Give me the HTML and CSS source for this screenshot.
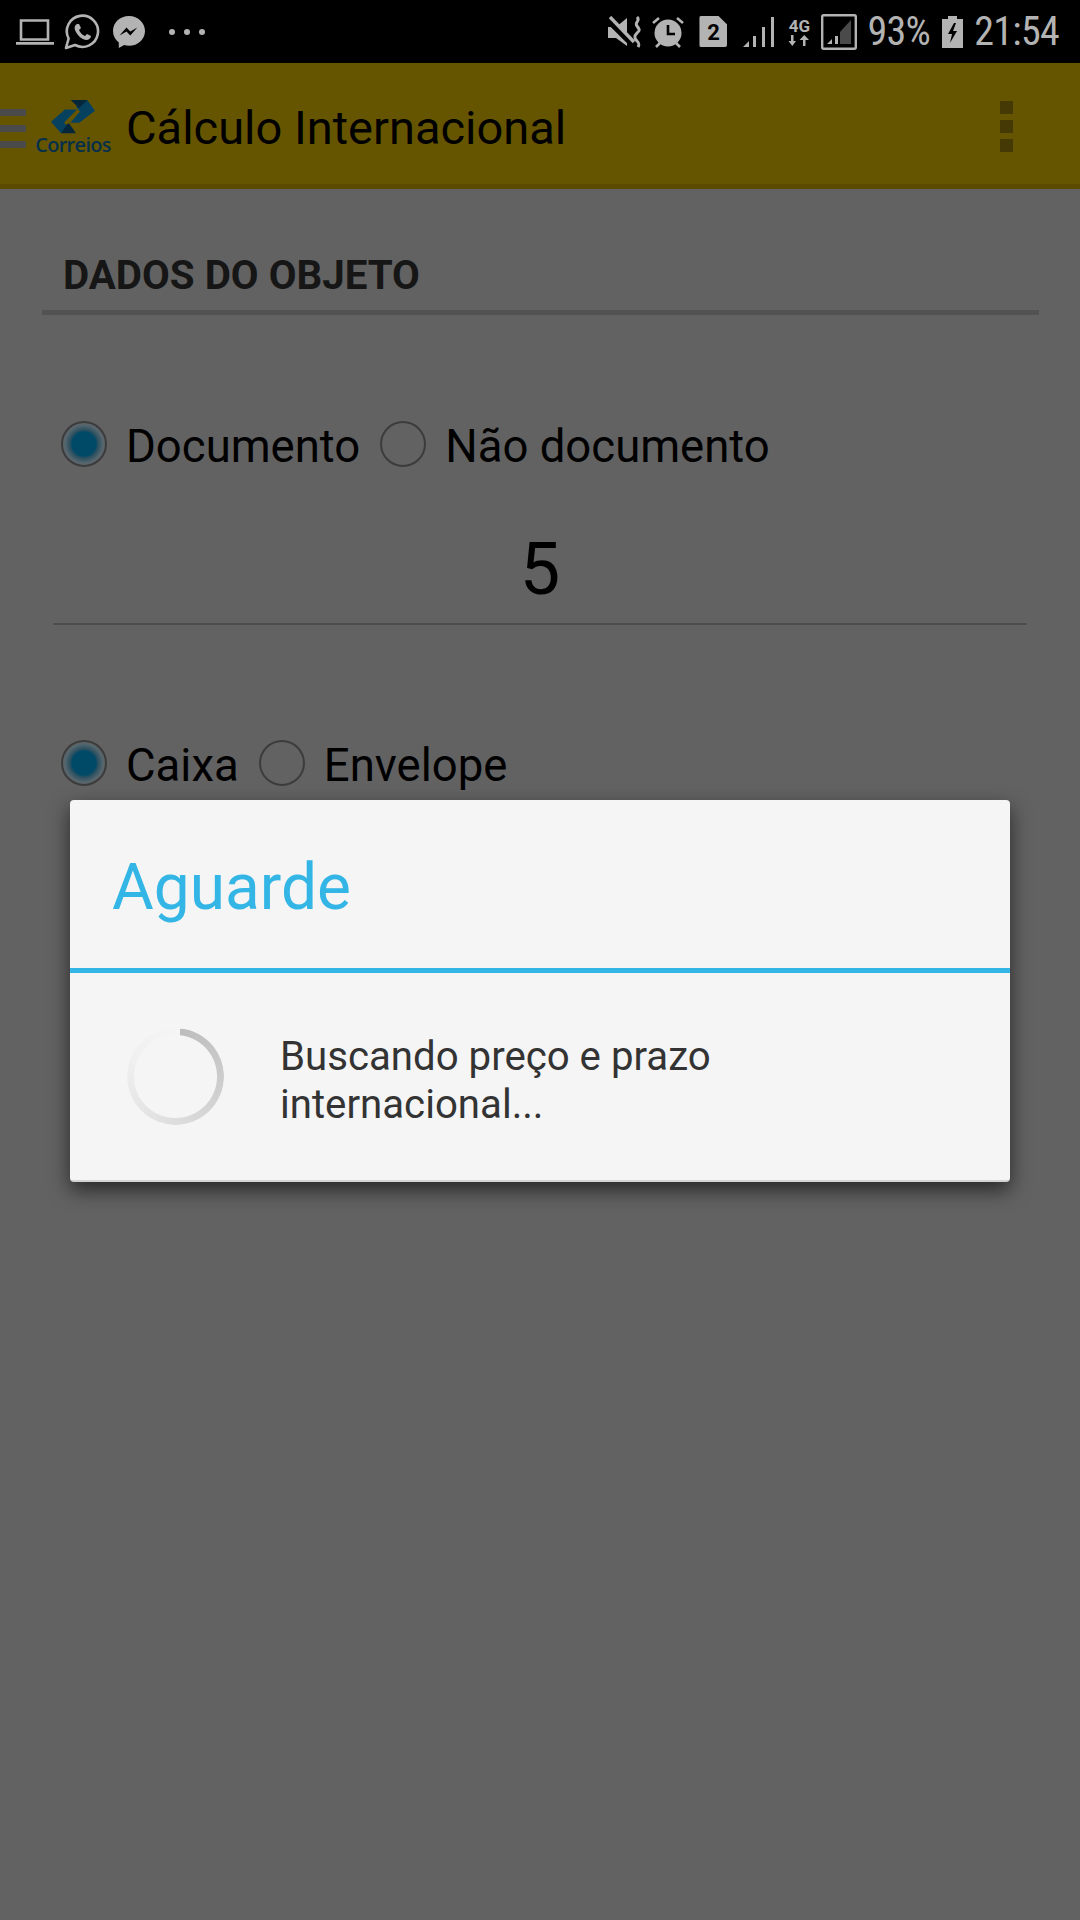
FILE: index.html
```html
<!DOCTYPE html>
<html lang="pt-BR">
<head>
  <meta charset="UTF-8">
  <title>Cálculo Internacional</title>
  <link rel="stylesheet" href="styles.css">
</head>
<body>
  <div class="screen">
    <div class="statusbar">
      <div class="status-left">
        <svg class="ic" width="38" height="30" viewBox="0 0 38 30"><path d="M5 3.500h27v19H5z" fill="none" stroke="#b3b3b3" stroke-width="2.600"/><path d="M0 25h38v2.800H0z" fill="#b3b3b3"/></svg>
        <svg class="ic wa" width="36" height="36" viewBox="0 0 36 36"><path d="M2 34l2.600-9.500A15.600 15.600 0 1 1 11 31z" fill="none" stroke="#b3b3b3" stroke-width="2.600" stroke-linejoin="round"/><path d="M13 10c-2 1-3 3-2 6 2 5 6 9 11 10 3 0 5-2 5-4l-4-2-2 2c-3-1-5-4-6-6l2-2-2-4z" fill="#b3b3b3"/></svg>
        <svg class="ic ms" width="32" height="32" viewBox="0 0 32 32"><path d="M16 0C7 0 0 6.600 0 15c0 4.800 2.300 8.800 5.800 11.500V32l5.300-2.900c1.600.4 3.200.7 4.900.7 9 0 16-6.600 16-14.800S25 0 16 0z" fill="#b3b3b3"/><path d="M6.500 19.500l7-8 3.800 4 7-4-7 8-3.800-4z" fill="#000"/></svg>
        <div class="more"><i></i><i></i><i></i></div>
      </div>
      <div class="status-right">
        <svg class="ic" width="34" height="32" viewBox="0 0 34 32"><path d="M0 11h8l11-9v28L8 22H0z" fill="#b3b3b3"/><path d="M0 4l24 24" stroke="#000" stroke-width="6"/><path d="M2 1l24 25" stroke="#b3b3b3" stroke-width="3.400"/><path d="M29 1c4 4-3 5 0 9s3 4 0 7-3 5 0 8 2 4 1 6" fill="none" stroke="#b3b3b3" stroke-width="3"/></svg>
        <svg class="ic alarm" width="32" height="32" viewBox="0 0 32 32"><circle cx="16" cy="17" r="13.500" fill="#b3b3b3"/><path d="M16 9v9h7" fill="none" stroke="#000" stroke-width="2.600"/><path d="M1 7l6-5M31 7l-6-5M4 31l4-4M28 31l-4-4" stroke="#b3b3b3" stroke-width="2.600"/></svg>
        <div class="sim">2</div>
        <svg class="ic sig" width="32" height="32" viewBox="0 0 32 32" fill="#b3b3b3"><path d="M0 31l6-6v6zM10 20h3v11h-3zM19 11h3v20h-3zM28 1h3v30h-3z"/></svg>
        <div class="net">
          <span>4G</span>
          <svg width="22" height="11" viewBox="0 0 22 11" fill="#b3b3b3"><path d="M3 0h2.500v6H8l-3.700 5L.5 6H3zM15 11h2.500V5H21l-4.700-5L11.500 5H15z"/></svg>
        </div>
        <svg class="ic box" width="36" height="36" viewBox="0 0 36 36"><rect x="1.200" y="1.200" width="33.600" height="33.600" rx="1.500" fill="none" stroke="#b3b3b3" stroke-width="2.400"/><path d="M6 30l5-5v5zM14 22h3v8h-3z" fill="#b3b3b3"/><path d="M19 18l11-12v24H19z" fill="#4a4a4a"/></svg>
        <span class="pct">93%</span>
        <svg class="ic batt" width="21" height="32" viewBox="0 0 21 32"><path d="M6 0h9v3h6v29H0V3h6z" fill="#b3b3b3"/><path d="M12 7l-6 11h4l-2 9 7-12h-4l3-8z" fill="#000"/></svg>
        <span class="clock">21:54</span>
      </div>
    </div>

    <header class="appbar">
      <div class="burger"><i></i><i></i><i></i></div>
      <div class="logo">
        <svg width="44" height="34" viewBox="0 0 44 34">
          <path d="M36.300 0L44 10.700 28.300 22.700h-9L29 11.500 25 6.700z" fill="#06425f"/>
          <path d="M19.700 0h16.600L28 8z" fill="#06263c"/>
          <path d="M0 21.700L14 9.500h12L13 22.700l5 4.600-8 6z" fill="#06425f"/>
          <path d="M10 33.300h15l-7-10-2 1z" fill="#06263c"/>
        </svg>
        <span class="logo-text">Correios</span>
      </div>
      <h1 class="title">Cálculo Internacional</h1>
      <div class="overflow"><i></i><i></i><i></i></div>
    </header>

    <main class="content">
      <h2 class="section">DADOS DO OBJETO</h2>
      <div class="radios first">
        <span class="radio on"></span><span class="label">Documento</span>
        <span class="radio"></span><span class="label">Não documento</span>
      </div>
      <div class="field">5</div>
      <div class="radios second">
        <span class="radio on"></span><span class="label">Caixa</span>
        <span class="radio"></span><span class="label">Envelope</span>
      </div>
    </main>

    <div class="dialog">
      <div class="dialog-title">Aguarde</div>
      <div class="dialog-body">
        <div class="spinner"></div>
        <p class="msg">Buscando preço e prazo<br>internacional...</p>
      </div>
    </div>
  </div>
</body>
</html>
```

FILE: styles.css
```css
* {
  box-sizing: border-box;
}

body {
  margin: 0;
  font-family: Roboto, sans-serif;
  background: #626262;
}

.screen {
  position: relative;
  width: 1080px;
  height: 1920px;
  overflow: hidden;
  background: #626262;
}

.ic {
  display: block;
}

/* status bar */
.statusbar {
  height: 63px;
  background: #000;
  display: flex;
  justify-content: space-between;
  align-items: center;
  padding: 0 21px 0 16px;
}

.status-left, .status-right {
  display: flex;
  align-items: center;
}

.wa {
  margin-left: 10px;
}

.ms {
  margin-left: 13px;
}

.more {
  display: flex;
  gap: 9px;
  margin-left: 24px;
}

.more i {
  width: 6px;
  height: 6px;
  border-radius: 50%;
  background: #b3b3b3;
}

.alarm {
  margin-left: 10px;
}

.sim {
  width: 28px;
  height: 31px;
  margin-left: 15px;
  background: #b3b3b3;
  clip-path: polygon(0 0, 68% 0, 100% 28%, 100% 100%, 0 100%);
  border-radius: 2px;
  color: #000;
  font-size: 22px;
  font-weight: 700;
  line-height: 33px;
  text-align: center;
}

.sig {
  margin-left: 16px;
}

.net {
  display: flex;
  flex-direction: column;
  align-items: center;
  width: 26px;
  margin-left: 11px;
  color: #b3b3b3;
}

.net span {
  font-size: 17px;
  font-weight: 700;
  line-height: 17px;
}

.box {
  margin-left: 9px;
}

.pct, .clock {
  color: #b3b3b3;
  font-size: 40px;
  font-stretch: condensed;
  letter-spacing: -.7px;
}

.pct {
  margin-left: 10px;
}

.batt {
  margin-left: 12px;
}

.clock {
  margin-left: 11px;
}

/* app bar */
.appbar {
  height: 126px;
  background: #665500;
  border-bottom: 5px solid #5a4b00;
  display: flex;
  align-items: center;
}

.burger {
  width: 26px;
  margin-top: 9px;
  display: flex;
  flex-direction: column;
  gap: 9px;
}

.burger i {
  height: 7px;
  background: #4a4a4a;
}

.logo {
  width: 74px;
  margin: 6px 0 0 10px;
  display: flex;
  flex-direction: column;
  align-items: center;
  gap: 2px;
}

.logo svg {
  display: block;
}

.logo-text {
  color: #06304a;
  font-family: "Open Sans", sans-serif;
  font-size: 20px;
  font-weight: 600;
  line-height: 18px;
  letter-spacing: -.7px;
}

.title {
  margin: 8px 0 0 16px;
  flex: 1;
  color: #000;
  font-size: 47px;
  font-weight: 400;
}

.overflow {
  width: 13px;
  margin: 6px 67px 0 0;
  display: flex;
  flex-direction: column;
  gap: 6px;
}

.overflow i {
  height: 13px;
  background: #453a05;
}

/* form */
.content {
  padding: 0 41px 0 42px;
}

.section {
  margin: 0;
  padding: 0 0 11px 21px;
  height: 126px;
  display: flex;
  align-items: flex-end;
  border-bottom: 5px solid #525252;
  color: #161616;
  font-size: 40.300px;
  font-weight: 700;
}

.radios {
  display: flex;
  align-items: center;
  color: #000;
  font-size: 45.500px;
  padding-left: 19px;
  height: 46px;
}

.radios.first {
  margin-top: 106px;
}

.radios.second {
  margin-top: 115px;
}

.radio {
  width: 46px;
  height: 46px;
  border: 2px solid #3c3c3c;
  border-radius: 50%;
  flex: none;
}

.radio.on {
  background: radial-gradient(circle, #004a68 0, #004a68 12px, #2a4f60 14px, #55666e 19px, #626262 22px);
}

.label {
  margin: 4px 20px 0 19px;
}

.field {
  margin: 62px 12px 0 11px;
  height: 96px;
  border-bottom: 2px solid #4d4d4d;
  color: #000;
  font-size: 72px;
  line-height: 82px;
  text-align: center;
}

/* dialog over the form */
.dialog {
  position: absolute;
  left: 70px;
  top: 800px;
  width: 940px;
  height: 382px;
  background: #f5f5f5;
  border-radius: 4px;
  border-bottom: 2px solid #d4d4d4;
  box-shadow: 0 8px 20px rgba(0, 0, 0, .6);
}

.dialog-title {
  height: 173px;
  padding: 0 42px;
  border-bottom: 5px solid #33b5e5;
  color: #33b5e5;
  font-size: 64px;
  line-height: 176px;
}

.dialog-body {
  display: flex;
  align-items: center;
  height: 207px;
  padding: 0 0 0 57px;
}

.spinner {
  width: 97px;
  height: 97px;
  border-radius: 50%;
  background: conic-gradient(from 6deg, #bdbdbd, #d0d0d0 30%, #e2e2e2 55%, #f0f0f0 80%, #f5f5f5);
  -webkit-mask: radial-gradient(circle, transparent 41px, #000 42px);
  mask: radial-gradient(circle, transparent 41px, #000 42px);
}

.msg {
  margin: 8px 0 0 56px;
  color: #333;
  font-size: 40.200px;
  line-height: 48px;
}
```
